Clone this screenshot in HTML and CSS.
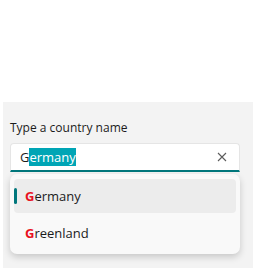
FILE: index.html
```html
<!DOCTYPE html>
<html lang="en">
<head>
    <meta charset="UTF-8" />
    <title>Country box</title>
    <link rel="stylesheet" href="styles.css">
</head>
<body>

<div class="panel">
    <div class="label">Type a country name</div>
    <div class="textbox">
        <span class="value">G<span class="sel">ermany</span></span>
        <svg class="clear" width="10" height="10" viewBox="0 0 10 10">
            <path d="M1 1 L9 9 M9 1 L1 9" stroke="#5c5c5c" stroke-width="1.1" fill="none" />
        </svg>
    </div>
    <div class="suggestions">
        <div class="item active"><span class="mark"></span><b>G</b>ermany</div>
        <div class="item"><b>G</b>reenland</div>
    </div>
</div>

</body>
</html>
```

FILE: styles.css
```css
* {
    box-sizing: border-box;
    margin: 0;
    padding: 0;
}

body {
    font-family: 'Open Sans', sans-serif;
    background: white;
    width: 256px;
    height: 268px;
    overflow: hidden;
    padding: 102px 3px 0 3px;
}

.panel {
    background: #f3f3f3;
    height: 166px;
    padding: 17px 13px 0 7px;
}

.label {
    font-size: 12px;
    color: #1b1b1b;
    height: 24px;
    line-height: 17px;
}

.textbox {
    background: white;
    height: 29px;
    border: 1px solid #e5e5e5;
    border-bottom: 2px solid #00777c;
    border-radius: 4px 4px 0 0;
    display: flex;
    align-items: center;
    padding: 0 12px 0 9px;
}

.value {
    flex: 1;
    font-size: 13px;
    color: #1b1b1b;
}

.sel {
    background: #00a5b5;
    color: white;
}

.clear {
    display: block;
}

.suggestions {
    margin-top: 2px;
    background: #f9f9f9;
    border-radius: 7px;
    box-shadow: 0 3px 7px rgba(0, 0, 0, 0.18);
    padding: 5px 4px 5px 4px;
    height: 80px;
}

.item {
    position: relative;
    height: 34px;
    display: flex;
    align-items: center;
    padding-left: 11px;
    font-size: 13px;
    color: #1b1b1b;
    border-radius: 4px;
    margin-bottom: 3px;
}

.item b {
    color: #e81123;
    font-weight: 700;
}

.item.active {
    background: #ececec;
}

.mark {
    position: absolute;
    left: 0;
    top: 9px;
    width: 3px;
    height: 16px;
    border-radius: 2px;
    background: #00777c;
}
```
